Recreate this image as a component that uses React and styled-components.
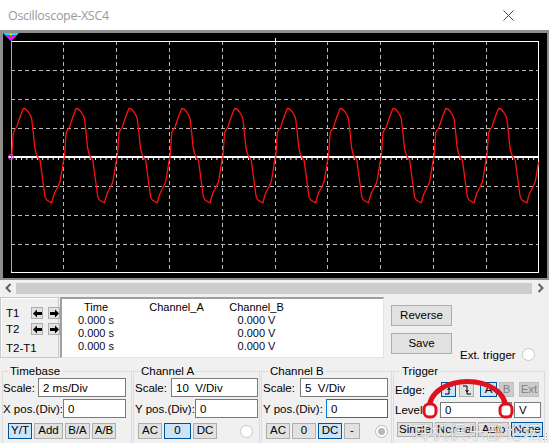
import React from 'react';
import styled, { createGlobalStyle, css } from 'styled-components';

const UI = "'Liberation Sans', Arial, sans-serif";

const GlobalStyle = createGlobalStyle`
  html, body {
    margin: 0;
    padding: 0;
    background: #f0f0f0;
  }
  * {
    box-sizing: border-box;
  }
`;

const Window = styled.div`
  position: relative;
  width: 549px;
  height: 443px;
  overflow: hidden;
  background: #f0f0f0;
  font-family: ${UI};
  font-size: 11px;
  color: #000;
`;

const TitleBar = styled.div`
  height: 30px;
  background: #fff;
  display: flex;
  align-items: center;
  justify-content: space-between;
  padding: 0 35px 0 8px;
`;

const Title = styled.span`
  font-size: 12.5px;
  color: #9a9a9a;
  letter-spacing: -0.3px;
  font-family: 'Open Sans', ${UI};
`;

const Screen = styled.div`
  height: 250px;
  border-style: solid;
  border-color: #8e8e8e;
  border-width: 3px 2px 2px 3px;
  background: #000;
  line-height: 0;
`;

const ScrollBar = styled.div`
  height: 16px;
  display: flex;
  align-items: center;
`;

const ScrollArrow = styled.div`
  width: ${p => p.$w}px;
  height: 16px;
  display: flex;
  align-items: center;
  justify-content: center;
`;

const ScrollTrack = styled.div`
  flex: 1;
  height: 11px;
  background: #cdcdcd;
`;

const TopRow = styled.div`
  height: 62px;
  padding-top: 1px;
  display: flex;
`;

const CursorBox = styled.div`
  width: 59px;
  height: 61px;
  border: 1px solid #c9c9c9;
  box-shadow: inset 1px 1px 0 #fff;
  padding: 9px 0 0 5px;
  display: grid;
  grid-template-columns: 20px 12px 12px;
  grid-auto-rows: 12px;
  column-gap: 5px;
  row-gap: 4px;
  align-items: center;
  font-size: 11.5px;
`;

const CursorLabel = styled.span`
  grid-column: 1 / span 3;
  margin-top: 6px;
`;

const ArrowBtn = styled.div`
  width: 12px;
  height: 12px;
  border: 1px solid #adadad;
  background: #e1e1e1;
  display: flex;
  align-items: center;
  justify-content: center;
`;

const DataTable = styled.div`
  width: 324px;
  height: 61px;
  margin-left: 1px;
  background: #fff;
  border-style: solid;
  border-width: 2px 1px 1px 2px;
  border-color: #a0a0a0 #e3e3e3 #e3e3e3 #a0a0a0;
  padding-top: 2px;
  display: grid;
  grid-template-columns: 68px 93px 67px;
  grid-auto-rows: 13px;
  line-height: 13px;
  font-size: 11px;
`;

const Cell = styled.span`
  text-align: center;
  white-space: pre;
  color: ${p => (p.$head ? '#000' : '#0a0a20')};
`;

const ButtonColumn = styled.div`
  margin-left: 7px;
  padding-top: 8px;
  display: flex;
  flex-direction: column;
  gap: 7px;
`;

const Btn = styled.button`
  width: ${p => p.$w}px;
  height: ${p => p.$h || 16}px;
  padding: 0;
  margin: 0;
  font-family: ${UI};
  font-size: 11.5px;
  line-height: 1;
  color: #000;
  background: #e1e1e1;
  border: 1px solid #adadad;
  display: flex;
  align-items: center;
  justify-content: center;
  flex: none;
  ${p => p.$active && css`
    background: #cce4f7;
    border-color: #005499;
  `}
  ${p => p.$off && css`
    background: #cccccc;
    border-color: #bfbfbf;
    color: #838383;
  `}
`;

const ExtTrigger = styled.div`
  align-self: flex-end;
  margin: 0 0 -3px 8px;
  display: flex;
  align-items: center;
  gap: 6px;
  font-size: 11.5px;
`;

const Radio = styled.span`
  width: 13px;
  height: 13px;
  border-radius: 50%;
  border: 1px solid ${p => (p.$on ? '#bcbcbc' : '#c8c8c8')};
  background: #fff;
  display: inline-flex;
  align-items: center;
  justify-content: center;
  flex: none;
  &::after {
    content: '';
    width: 7px;
    height: 7px;
    border-radius: 50%;
    background: ${p => (p.$on ? '#b8b8b8' : 'transparent')};
  }
`;

const Groups = styled.div`
  margin-top: 7px;
  padding-left: 2px;
  display: flex;
  gap: 1px;
`;

const Group = styled.fieldset`
  width: ${p => p.$w}px;
  height: 82px;
  margin: 0;
  padding: 0 ${p => p.$pr}px 0 ${p => p.$pl}px;
  border: 1px solid #dcdcdc;
  min-width: 0;
`;

const Legend = styled.legend`
  font-size: 11.5px;
  line-height: 13px;
  padding: 0 2px;
  margin-left: ${p => p.$ml || 4}px;
`;

const Row = styled.div`
  height: ${p => p.$h || 19}px;
  margin-top: ${p => p.$mt || 0}px;
  padding-left: ${p => p.$pl || 0}px;
  display: flex;
  align-items: center;
  gap: ${p => (p.$gap === undefined ? 0 : p.$gap)}px;
  justify-content: ${p => (p.$between ? 'space-between' : 'flex-start')};
`;

const Label = styled.span`
  font-size: 11.5px;
  white-space: nowrap;
  width: ${p => (p.$w ? `${p.$w}px` : 'auto')};
  flex: none;
`;

const Field = styled.input`
  width: ${p => p.$w}px;
  height: ${p => p.$h || 19}px;
  margin: 0;
  padding: 0 0 0 4px;
  border: 1px solid ${p => (p.$focus ? '#0078d7' : '#7a7a7a')};
  background: #fff;
  font-family: ${UI};
  font-size: 11.5px;
  color: #000;
  outline: none;
  white-space: pre;
  flex: none;
`;

const Spacer = styled.span`
  flex: 1;
`;

const Watermark = styled.div`
  position: absolute;
  left: 410px;
  top: 375px;
  width: 139px;
  height: 68px;
  pointer-events: none;
`;

const WatermarkText = styled.span`
  position: absolute;
  left: 2px;
  bottom: -1px;
  font-family: 'Noto Sans CJK SC', sans-serif;
  font-size: 18px;
  letter-spacing: 0.5px;
  color: rgba(255, 255, 255, 0.85);
  text-shadow: 0 0 1px rgba(60, 60, 60, 0.6);
  white-space: nowrap;
`;

const Grip = styled.svg`
  position: absolute;
  right: 1px;
  bottom: 1px;
`;

// one period of the captured waveform, relative to the zero crossing
const PERIOD = 52.8;
const SHAPE = [
  [0, 0], [0.8, -12], [1.6, -24], [3, -27], [5, -30], [8.3, -40], [11.6, -48.5],
  [14, -48], [16.6, -45], [19, -41], [20, -38], [21.6, -24], [23, -10], [24.3, -4],
  [26, 0], [28.3, 3], [31, 23], [33.3, 40], [35, 43], [38.3, 45], [40, 46],
  [41.5, 40], [43.3, 35], [46, 30], [48.3, 25], [50.5, 12], [51.5, 5], [52.8, 0],
];

function wavePath() {
  const pts = [];
  for (let p = 0; p < 11; p++) {
    for (const [dx, dy] of SHAPE) {
      const x = 11.7 + p * PERIOD + dx;
      if (x > 539) break;
      pts.push(`${x.toFixed(1)},${(157 + dy).toFixed(1)}`);
    }
  }
  return 'M' + pts.join(' L');
}

const ScopeDisplay = () => {
  const vLines = [];
  for (let i = 1; i < 10; i++) vLines.push(11 + i * PERIOD);
  const hLines = [70, 99, 128, 186, 215, 244];
  const ticks = [];
  for (let k = 1; k < 100; k++) ticks.push(11 + k * 5.28);

  return (
    <svg width="544" height="245" viewBox="3 33 544 245">
      <g stroke="#b8b8b8" strokeDasharray="4 3" strokeWidth="1" shapeRendering="crispEdges">
        {vLines.map(x => (
          <line key={x} x1={x} y1="41" x2={x} y2="273" />
        ))}
        {hLines.map(y => (
          <line key={y} x1="11" y1={y} x2="539" y2={y} />
        ))}
      </g>
      <rect x="11.5" y="41.5" width="527" height="231" fill="none" stroke="#fff" strokeWidth="1" />
      <line x1="275.5" y1="38" x2="275.5" y2="41" stroke="#fff" />
      <line x1="8" y1="157" x2="539" y2="157" stroke="#fff" strokeWidth="2" />
      <g stroke="#fff" strokeWidth="1">
        {ticks.map(x => (
          <line key={x} x1={x} y1="157" x2={x} y2="160" />
        ))}
      </g>
      <line x1="11.5" y1="33" x2="11.5" y2="271" stroke="#33ff33" strokeWidth="1" />
      <path d={wavePath()} fill="none" stroke="#ff1010" strokeWidth="1.3" strokeLinejoin="round" />
      <circle cx="11" cy="157" r="2.5" fill="none" stroke="#ff33ff" strokeWidth="1" />
      <polygon points="3,33 19,33 11,41" fill="#00e5ff" />
      <polygon points="5,35 17,35 11,41" fill="#ff00ff" />
      <rect x="10" y="34" width="2" height="4" fill="#ffff00" />
      <rect x="10.5" y="35" width="1" height="3" fill="#000" />
    </svg>
  );
};

const Chevron = ({ dir }) => (
  <svg width="7" height="10" viewBox="0 0 7 10">
    <path
      d={dir === 'left' ? 'M5.5 1 L1.5 5 L5.5 9' : 'M1.5 1 L5.5 5 L1.5 9'}
      fill="none"
      stroke="#606060"
      strokeWidth="2"
    />
  </svg>
);

const Arrow = ({ dir }) => (
  <svg width="9" height="9" viewBox="0 0 9 9">
    <polygon
      points={dir === 'left' ? '0,4.5 4,0.5 4,3 9,3 9,6 4,6 4,8.5' : '9,4.5 5,0.5 5,3 0,3 0,6 5,6 5,8.5'}
      fill="#000"
    />
  </svg>
);

const EdgeIcon = ({ rising }) => (
  <svg width="10" height="10" viewBox="0 0 10 10">
    <path
      d={rising ? 'M1 9 H5 V1 H9' : 'M1 1 H5 V9 H9'}
      fill="none"
      stroke="#000"
      strokeWidth="1"
    />
    <path d={rising ? 'M3.5 5 L5 3 L6.5 5' : 'M3.5 5 L5 7 L6.5 5'} fill="none" stroke="#000" strokeWidth="1" />
  </svg>
);

const readings = [
  ['Time', 'Channel_A', 'Channel_B'],
  ['0.000 s', '', '0.000 V'],
  ['0.000 s', '', '0.000 V'],
  ['0.000 s', '', '0.000 V'],
];

export default function App() {
  return (
    <>
      <GlobalStyle />
      <Window>
        <TitleBar>
          <Title>Oscilloscope-XSC4</Title>
          <svg width="11" height="11" viewBox="0 0 11 11">
            <path d="M0.5 0.5 L10.5 10.5 M10.5 0.5 L0.5 10.5" stroke="#444" strokeWidth="1" />
          </svg>
        </TitleBar>

        <Screen>
          <ScopeDisplay />
        </Screen>

        <ScrollBar>
          <ScrollArrow $w={16}><Chevron dir="left" /></ScrollArrow>
          <ScrollTrack />
          <ScrollArrow $w={17}><Chevron dir="right" /></ScrollArrow>
        </ScrollBar>

        <TopRow>
          <CursorBox>
            <span>T1</span>
            <ArrowBtn><Arrow dir="left" /></ArrowBtn>
            <ArrowBtn><Arrow dir="right" /></ArrowBtn>
            <span>T2</span>
            <ArrowBtn><Arrow dir="left" /></ArrowBtn>
            <ArrowBtn><Arrow dir="right" /></ArrowBtn>
            <CursorLabel>T2-T1</CursorLabel>
          </CursorBox>

          <DataTable>
            {readings.map((row, r) =>
              row.map((txt, c) => (
                <Cell key={`${r}-${c}`} $head={r === 0}>{txt}</Cell>
              ))
            )}
          </DataTable>

          <ButtonColumn>
            <Btn $w={61} $h={21}>Reverse</Btn>
            <Btn $w={61} $h={21}>Save</Btn>
          </ButtonColumn>

          <ExtTrigger>
            Ext. trigger
            <Radio />
          </ExtTrigger>
        </TopRow>

        <Groups>
          <Group $w={130} $pl={0} $pr={5}>
            <Legend $ml={5}>Timebase</Legend>
            <Row $between>
              <Label>Scale:</Label>
              <Field $w={88} defaultValue="2 ms/Div" readOnly />
            </Row>
            <Row $between $mt={2}>
              <Label>X pos.(Div):</Label>
              <Field $w={63} defaultValue="0" readOnly />
            </Row>
            <Row $h={16} $mt={5} $pl={5} $gap={2}>
              <Btn $w={24} $active>Y/T</Btn>
              <Btn $w={29}>Add</Btn>
              <Btn $w={25}>B/A</Btn>
              <Btn $w={24}>A/B</Btn>
            </Row>
          </Group>

          <Group $w={127} $pl={1} $pr={1}>
            <Legend $ml={4}>Channel A</Legend>
            <Row $between>
              <Label>Scale:</Label>
              <Field $w={87} defaultValue="10  V/Div" readOnly />
            </Row>
            <Row $between $mt={2}>
              <Label>Y pos.(Div):</Label>
              <Field $w={63} defaultValue="0" readOnly />
            </Row>
            <Row $h={16} $mt={5} $pl={3} $gap={2}>
              <Btn $w={24}>AC</Btn>
              <Btn $w={27} $active>0</Btn>
              <Btn $w={24}>DC</Btn>
              <Spacer />
              <Radio style={{ marginRight: 5 }} />
            </Row>
          </Group>

          <Group $w={131} $pl={1} $pr={3}>
            <Legend $ml={5}>Channel B</Legend>
            <Row $between>
              <Label>Scale:</Label>
              <Field $w={88} defaultValue="5  V/Div" readOnly />
            </Row>
            <Row $between $mt={2}>
              <Label>Y pos.(Div):</Label>
              <Field $w={62} $focus defaultValue="0" readOnly />
            </Row>
            <Row $h={16} $mt={5} $pl={3} $gap={2}>
              <Btn $w={24}>AC</Btn>
              <Btn $w={24}>0</Btn>
              <Btn $w={24} $active>DC</Btn>
              <Btn $w={16}>-</Btn>
              <Spacer />
              <Radio $on />
            </Row>
          </Group>

          <Group $w={152} $pl={1} $pr={1}>
            <Legend $ml={5}>Trigger</Legend>
            <Row $h={15} $mt={4}>
              <Label $w={46}>Edge:</Label>
              <Btn $w={15} $h={15} $active><EdgeIcon rising /></Btn>
              <Btn $w={15} $h={15} style={{ marginLeft: 3 }}><EdgeIcon /></Btn>
              <Btn $w={17} $h={15} $active style={{ marginLeft: 6 }}>A</Btn>
              <Btn $w={15} $h={15} $off style={{ marginLeft: 2 }}>B</Btn>
              <Btn $w={20} $h={15} $off style={{ marginLeft: 5 }}>Ext</Btn>
            </Row>
            <Row $h={16} $mt={5} $gap={2}>
              <Label $w={43}>Level:</Label>
              <Field $w={72} $h={16} defaultValue="0" readOnly />
              <Field $w={27} $h={16} defaultValue="V" readOnly />
            </Row>
            <Row $h={15} $mt={4} $pl={2} $gap={2}>
              <Btn $w={36} $h={15}>Single</Btn>
              <Btn $w={41} $h={15}>Normal</Btn>
              <Btn $w={31} $h={15}>Auto</Btn>
              <Btn $w={32} $h={15} $active>None</Btn>
            </Row>
          </Group>
        </Groups>

        <Watermark>
          <svg width="139" height="50" viewBox="410 375 139 50">
            <path d="M429 410 C429 372 506 372 506 410" fill="none" stroke="#e0101e" strokeWidth="5" />
            <rect x="424" y="404" width="12" height="13" rx="5" fill="#fff" stroke="#e0101e" strokeWidth="3" />
            <rect x="500" y="404" width="12" height="13" rx="5" fill="#fff" stroke="#e0101e" strokeWidth="3" />
          </svg>
          <WatermarkText>耳机俱乐部论坛</WatermarkText>
        </Watermark>

        <Grip width="6" height="10" viewBox="0 0 6 10">
          {[[4, 1], [4, 4], [1, 4], [4, 7], [1, 7]].map(([x, y]) => (
            <rect key={`${x}${y}`} x={x} y={y} width="1" height="1" fill="#999" />
          ))}
        </Grip>
      </Window>
    </>
  );
}
